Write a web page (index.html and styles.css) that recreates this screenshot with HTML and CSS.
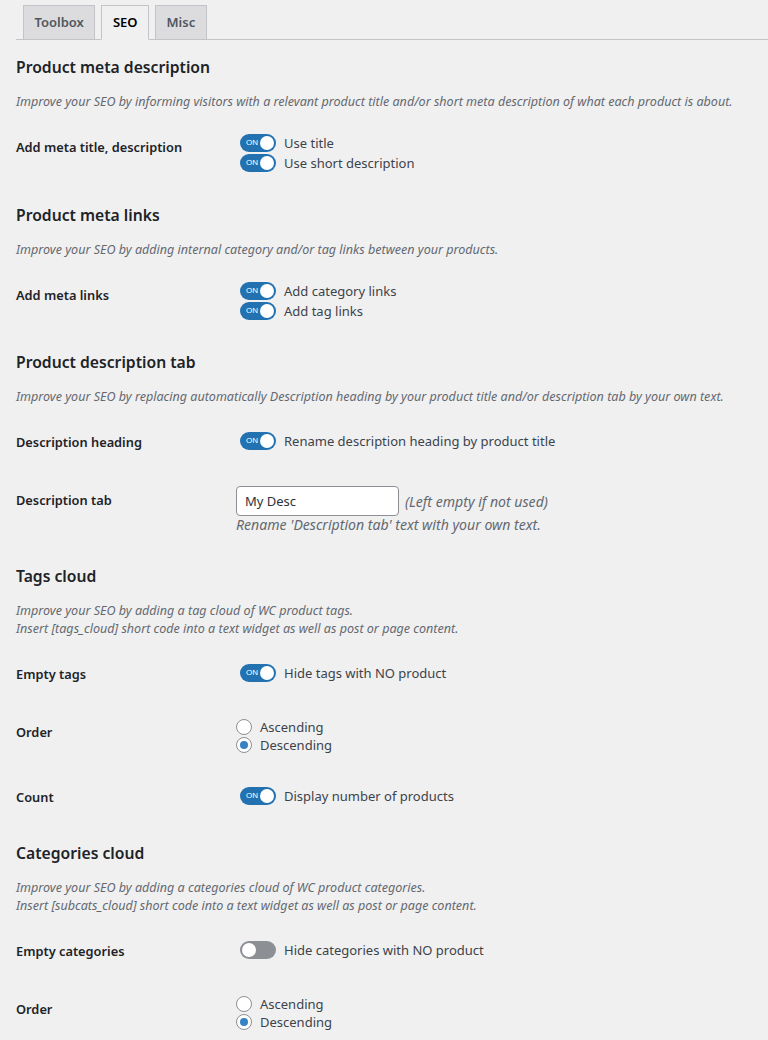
FILE: index.html
```html
<!DOCTYPE html>
<html lang="en">
<head>
<meta charset="utf-8">
<title>SEO settings</title>
<link rel="stylesheet" href="styles.css">
</head>
<body>
<div class="wrap">
  <nav class="tabs">
    <a class="tab">Toolbox</a>
    <a class="tab active">SEO</a>
    <a class="tab">Misc</a>
  </nav>

  <section class="section">
    <h2>Product meta description</h2>
    <p class="desc">Improve your SEO by informing visitors with a relevant product title and/or short meta description of what each product is about.</p>
    <div class="row">
      <div class="th">Add meta title, description</div>
      <div class="td">
        <label class="opt"><span class="toggle on"><span class="on-txt">ON</span><span class="knob"></span></span>Use title</label>
        <label class="opt"><span class="toggle on"><span class="on-txt">ON</span><span class="knob"></span></span>Use short description</label>
      </div>
    </div>
  </section>

  <section class="section">
    <h2>Product meta links</h2>
    <p class="desc">Improve your SEO by adding internal category and/or tag links between your products.</p>
    <div class="row">
      <div class="th">Add meta links</div>
      <div class="td">
        <label class="opt"><span class="toggle on"><span class="on-txt">ON</span><span class="knob"></span></span>Add category links</label>
        <label class="opt"><span class="toggle on"><span class="on-txt">ON</span><span class="knob"></span></span>Add tag links</label>
      </div>
    </div>
  </section>

  <section class="section">
    <h2>Product description tab</h2>
    <p class="desc">Improve your SEO by replacing automatically Description heading by your product title and/or description tab by your own text.</p>
    <div class="row">
      <div class="th">Description heading</div>
      <div class="td single">
        <label class="opt"><span class="toggle on"><span class="on-txt">ON</span><span class="knob"></span></span>Rename description heading by product title</label>
      </div>
    </div>
    <div class="row">
      <div class="th">Description tab</div>
      <div class="td">
        <div class="input-line"><input class="text-input" type="text" value="My Desc"><span class="hint">(Left empty if not used)</span></div>
        <p class="help">Rename 'Description tab' text with your own text.</p>
      </div>
    </div>
  </section>

  <section class="section">
    <h2>Tags cloud</h2>
    <p class="desc">Improve your SEO by adding a tag cloud of WC product tags.<br>Insert [tags_cloud] short code into a text widget as well as post or page content.</p>
    <div class="row">
      <div class="th">Empty tags</div>
      <div class="td single">
        <label class="opt"><span class="toggle on"><span class="on-txt">ON</span><span class="knob"></span></span>Hide tags with NO product</label>
      </div>
    </div>
    <div class="row">
      <div class="th">Order</div>
      <div class="td">
        <label class="radio-opt"><span class="radio"></span>Ascending</label>
        <label class="radio-opt"><span class="radio checked"></span>Descending</label>
      </div>
    </div>
    <div class="row">
      <div class="th">Count</div>
      <div class="td single">
        <label class="opt"><span class="toggle on"><span class="on-txt">ON</span><span class="knob"></span></span>Display number of products</label>
      </div>
    </div>
  </section>

  <section class="section">
    <h2>Categories cloud</h2>
    <p class="desc">Improve your SEO by adding a categories cloud of WC product categories.<br>Insert [subcats_cloud] short code into a text widget as well as post or page content.</p>
    <div class="row">
      <div class="th">Empty categories</div>
      <div class="td single">
        <label class="opt"><span class="toggle"><span class="knob"></span></span>Hide categories with NO product</label>
      </div>
    </div>
    <div class="row">
      <div class="th">Order</div>
      <div class="td">
        <label class="radio-opt"><span class="radio"></span>Ascending</label>
        <label class="radio-opt"><span class="radio checked"></span>Descending</label>
      </div>
    </div>
  </section>
</div>
</body>
</html>
```

FILE: styles.css
```css
* { box-sizing: border-box; }

html, body {
  margin: 0;
  padding: 0;
  background: #f0f0f1;
}

body {
  font-family: "Noto Sans", "Open Sans", sans-serif;
  font-size: 13px;
  color: #3c434a;
  overflow: hidden;
}

.wrap {
  padding: 0 0 0 16px;
}

.tabs {
  display: flex;
  align-items: flex-end;
  padding: 5px 0 0 7px;
  border-bottom: 1px solid #c3c4c7;
  height: 40px;
}

.tab {
  display: block;
  height: 35px;
  margin: 0 6px -1px 0;
  padding: 0 10.5px;
  line-height: 33px;
  font-size: 13px;
  font-weight: 600;
  color: #50575e;
  background: #dcdcde;
  border: 1px solid #c3c4c7;
}

.tab.active {
  background: #f0f0f1;
  color: #000;
  border-bottom-color: #f0f0f1;
}

.section h2 {
  margin: 16px 0 0;
  font-size: 15.7px;
  line-height: 24px;
  font-weight: 600;
  color: #1d2327;
}

.section:first-of-type h2 { margin-top: 15px; }

.desc {
  margin: 14px 0 6px;
  font-size: 12.55px;
  line-height: 18px;
  font-style: italic;
  color: #646970;
}

.row {
  display: grid;
  grid-template-columns: 220px 1fr;
}

.th {
  padding: 21px 0 19px;
  font-size: 12.8px;
  font-weight: 600;
  line-height: 18px;
  color: #1d2327;
}

.td {
  padding: 16px 0 13.5px;
}

.td.single {
  padding-top: 19px;
}

.opt {
  display: flex;
  align-items: center;
  height: 20px;
  line-height: 20px;
  color: #3c434a;
}

.toggle {
  position: relative;
  display: inline-block;
  flex: none;
  width: 36px;
  height: 18px;
  margin: 0 8px 0 4px;
  border-radius: 9px;
  background: #8c8f94;
}

.toggle.on {
  background: #2271b1;
}

.on-txt {
  position: absolute;
  left: 6px;
  top: 0;
  font-size: 8px;
  line-height: 18px;
  color: #fff;
  font-family: "Liberation Sans", sans-serif;
}

.knob {
  position: absolute;
  top: 2px;
  left: 2px;
  width: 14px;
  height: 14px;
  border-radius: 50%;
  background: #fff;
}

.toggle.on .knob {
  left: 20px;
}

.input-line {
  display: flex;
  align-items: center;
}

.text-input {
  width: 163px;
  height: 30px;
  margin: 0 6px 0 0;
  padding: 0 8px;
  border: 1px solid #8c8f94;
  border-radius: 4px;
  background: #fff;
  font-family: inherit;
  font-size: 13px;
  color: #2c3338;
}

.hint, .help {
  font-size: 14.1px;
  font-style: italic;
  color: #646970;
}

.help {
  margin: 0;
  line-height: 18px;
}

.radio-opt {
  display: flex;
  align-items: center;
  height: 18px;
  line-height: 18px;
  color: #3c434a;
}

.radio {
  position: relative;
  flex: none;
  width: 16px;
  height: 16px;
  margin-right: 8px;
  border: 1px solid #8c8f94;
  border-radius: 50%;
  background: #fff;
}

.radio.checked::after {
  content: "";
  position: absolute;
  top: 3px;
  left: 3px;
  width: 8px;
  height: 8px;
  border-radius: 50%;
  background: #3582c4;
}
```
